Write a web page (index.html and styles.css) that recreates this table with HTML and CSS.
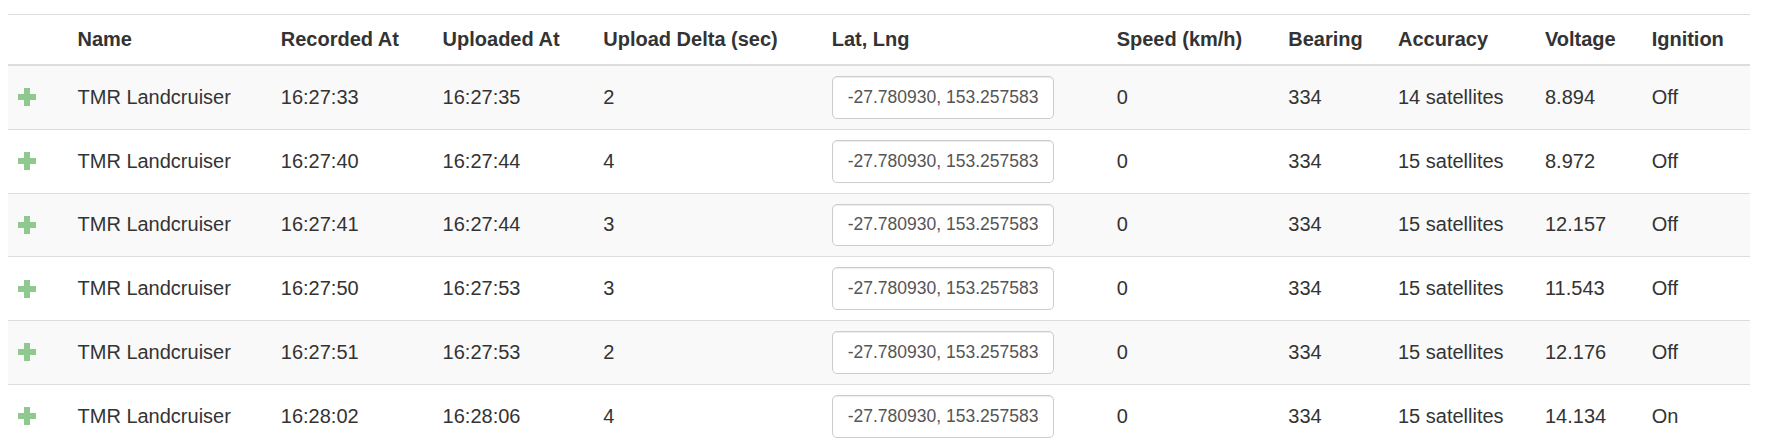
FILE: index.html
```html
<!DOCTYPE html>
<html>
<head>
<meta charset="utf-8">
<link rel="stylesheet" href="styles.css">
</head>
<body>
<table class="grid">
  <colgroup>
    <col class="c-icon"><col class="c-name"><col class="c-rec"><col class="c-up"><col class="c-delta"><col class="c-ll"><col class="c-speed"><col class="c-bear"><col class="c-acc"><col class="c-volt"><col class="c-ign">
  </colgroup>
  <thead>
    <tr>
      <th></th><th>Name</th><th>Recorded At</th><th>Uploaded At</th><th>Upload Delta (sec)</th><th>Lat, Lng</th><th>Speed (km/h)</th><th>Bearing</th><th>Accuracy</th><th>Voltage</th><th>Ignition</th>
    </tr>
  </thead>
  <tbody>
    <tr>
      <td><svg class="plus" viewBox="0 0 18 18"><path d="M6 0h6v6h6v6h-6v6h-6v-6h-6v-6h6z"/></svg></td>
      <td>TMR Landcruiser</td><td>16:27:33</td><td>16:27:35</td><td>2</td>
      <td><input class="ll" type="text" value="-27.780930, 153.257583"></td>
      <td>0</td><td>334</td><td>14 satellites</td><td>8.894</td><td>Off</td>
    </tr>
    <tr>
      <td><svg class="plus" viewBox="0 0 18 18"><path d="M6 0h6v6h6v6h-6v6h-6v-6h-6v-6h6z"/></svg></td>
      <td>TMR Landcruiser</td><td>16:27:40</td><td>16:27:44</td><td>4</td>
      <td><input class="ll" type="text" value="-27.780930, 153.257583"></td>
      <td>0</td><td>334</td><td>15 satellites</td><td>8.972</td><td>Off</td>
    </tr>
    <tr>
      <td><svg class="plus" viewBox="0 0 18 18"><path d="M6 0h6v6h6v6h-6v6h-6v-6h-6v-6h6z"/></svg></td>
      <td>TMR Landcruiser</td><td>16:27:41</td><td>16:27:44</td><td>3</td>
      <td><input class="ll" type="text" value="-27.780930, 153.257583"></td>
      <td>0</td><td>334</td><td>15 satellites</td><td>12.157</td><td>Off</td>
    </tr>
    <tr>
      <td><svg class="plus" viewBox="0 0 18 18"><path d="M6 0h6v6h6v6h-6v6h-6v-6h-6v-6h6z"/></svg></td>
      <td>TMR Landcruiser</td><td>16:27:50</td><td>16:27:53</td><td>3</td>
      <td><input class="ll" type="text" value="-27.780930, 153.257583"></td>
      <td>0</td><td>334</td><td>15 satellites</td><td>11.543</td><td>Off</td>
    </tr>
    <tr>
      <td><svg class="plus" viewBox="0 0 18 18"><path d="M6 0h6v6h6v6h-6v6h-6v-6h-6v-6h6z"/></svg></td>
      <td>TMR Landcruiser</td><td>16:27:51</td><td>16:27:53</td><td>2</td>
      <td><input class="ll" type="text" value="-27.780930, 153.257583"></td>
      <td>0</td><td>334</td><td>15 satellites</td><td>12.176</td><td>Off</td>
    </tr>
    <tr>
      <td><svg class="plus" viewBox="0 0 18 18"><path d="M6 0h6v6h6v6h-6v6h-6v-6h-6v-6h6z"/></svg></td>
      <td>TMR Landcruiser</td><td>16:28:02</td><td>16:28:06</td><td>4</td>
      <td><input class="ll" type="text" value="-27.780930, 153.257583"></td>
      <td>0</td><td>334</td><td>15 satellites</td><td>14.134</td><td>On</td>
    </tr>
  </tbody>
</table>
</body>
</html>
```
FILE: styles.css
```css
html, body {
  margin: 0;
  padding: 0;
  background: #fff;
}
body {
  padding: 14px 8px 0 8px;
  font-family: "Liberation Sans", Arial, sans-serif;
  font-size: 20px;
  line-height: 25px;
  color: #333;
}
.grid {
  width: 1742px;
  table-layout: fixed;
  border-collapse: collapse;
  border-spacing: 0;
}
.c-icon { width: 59.5px; }
.c-name { width: 203.3px; }
.c-rec { width: 161.8px; }
.c-up { width: 160.7px; }
.c-delta { width: 228.4px; }
.c-ll { width: 285px; }
.c-speed { width: 171.6px; }
.c-bear { width: 109.7px; }
.c-acc { width: 147px; }
.c-volt { width: 106.7px; }
.c-ign { width: 108.3px; }
.grid th {
  text-align: left;
  font-weight: bold;
  vertical-align: bottom;
  padding: 12px 10px 12px 10px;
  border-top: 1px solid #ddd;
  border-bottom: 2px solid #ddd;
  white-space: nowrap;
}
.grid td {
  padding: 10px 10px;
  vertical-align: middle;
  border-bottom: 1px solid #ddd;
  white-space: nowrap;
}
.grid tbody tr:nth-child(odd) td {
  background: #f9f9f9;
}
.plus {
  display: block;
  width: 18px;
  height: 18px;
  fill: #8fc98f;
}
.ll {
  display: block;
  box-sizing: border-box;
  width: 222px;
  height: 42.75px;
  padding: 7.5px 15px;
  margin: 0;
  font-family: "Liberation Sans", Arial, sans-serif;
  font-size: 17.5px;
  line-height: 25px;
  color: #555;
  background: #fff;
  border: 1px solid #ccc;
  border-radius: 5px;
  box-shadow: inset 0 1px 1px rgba(0,0,0,0.075);
  outline: none;
}
```
